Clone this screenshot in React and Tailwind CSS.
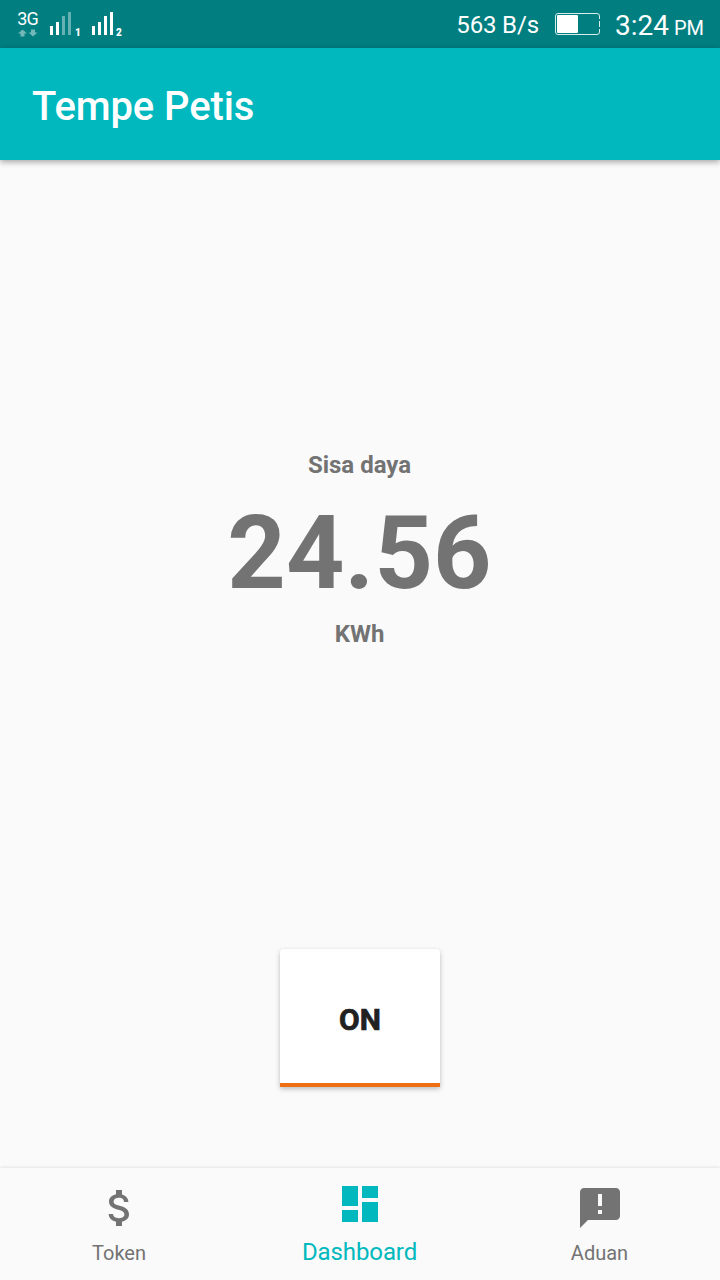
const Bars = ({ dim = 4 }) => (
  <svg className="h-6 w-[22px]" viewBox="0 0 22 24" fill="white">
    {[9, 13, 19, 23].map((h, i) => (
      <rect key={h} x={i * 6} y={24 - h} width="3" height={h} opacity={i >= dim ? 0.4 : 1} />
    ))}
  </svg>
);

function StatusBar() {
  return (
    <header className="flex h-12 shrink-0 items-start bg-[#007e80] text-white">
      <div className="ml-[17px] mt-3 flex w-[21px] flex-col items-center">
        <span className="h-[14px] text-[18px] leading-[14px] tracking-[-1px]">3G</span>
        <svg className="mt-[3px] h-2 w-[21px]" viewBox="0 0 21 8" fill="white" opacity="0.45">
          <path d="M5.500 0.500l4.500 4H7.500v3h-4v-3H1zM16 7.500l-4.500-4H14v-3h4v3h2.500z" />
        </svg>
      </div>
      <div className="ml-3 mt-[11px] flex items-end">
        <Bars dim={2} />
        <span className="ml-[3px] h-2 w-[7px] text-[10px] font-black leading-[11px]">1</span>
      </div>
      <div className="ml-[10px] mt-[11px] flex items-end">
        <Bars />
        <span className="ml-[2px] h-2 w-[7px] text-[10px] font-black leading-[11px]">2</span>
      </div>
      <span className="ml-auto mt-[9px] text-[24px] leading-8 tracking-[-0.15px]">563 B/s</span>
      <svg className="ml-4 mt-3 h-6 w-[46px]" viewBox="0 0 46 24">
        <path
          d="M44.500 7V4Q44.500 1.500 42 1.500H3Q.5 1.500.5 4v16q0 2.500 2.500 2.500h39q2.500 0 2.500-2.500v-3M44.500 9v6"
          fill="none"
          stroke="white"
          strokeOpacity="0.85"
        />
        <rect x="2" y="3" width="21" height="18" rx="1" fill="white" />
      </svg>
      <div className="ml-[14px] mr-4 mt-[10px] flex items-baseline leading-8">
        <span className="text-[28px]">3:24</span>
        <span className="ml-[5px] text-[20px]">PM</span>
      </div>
    </header>
  );
}

const icons = {
  token:
    'M11.8 10.9c-2.27-.59-3-1.2-3-2.150 0-1.090 1.010-1.850 2.700-1.850 1.780 0 2.440.85 2.500 2.100h2.210c-.07-1.720-1.120-3.300-3.210-3.810V3h-3v2.160c-1.940.42-3.500 1.680-3.500 3.610 0 2.310 1.910 3.460 4.700 4.130 2.500.6 3 1.480 3 2.410 0 .69-.49 1.790-2.700 1.790-2.060 0-2.870-.92-2.980-2.100h-2.200c.12 2.190 1.760 3.420 3.680 3.830V21h3v-2.150c1.950-.37 3.500-1.500 3.500-3.550 0-2.840-2.430-3.810-4.700-4.400z',
  dashboard: 'M3 13h8V3H3v10zm0 8h8v-6H3v6zm10 0h8V11h-8v10zm0-18v6h8V3h-8z',
  complaint:
    'M20 2H4c-1.100 0-1.990.9-1.990 2L2 22l4-4h14c1.100 0 2-.9 2-2V4c0-1.100-.9-2-2-2zm-7 13h-2v-2h2v2zm0-4h-2V5h2v6z',
};

const labelStyles = {
  token: 'mt-[5px] pr-0.5 text-[20px] leading-8',
  dashboard: 'mt-2 pr-px text-[24px] leading-8 tracking-[-0.1px]',
  complaint: 'mt-[5px] pr-px text-[20px] leading-8',
};

function NavItem({ icon, label, active }) {
  return (
    <button
      className={
        active
          ? 'flex flex-1 flex-col items-center pt-3 text-[#00b8bd]'
          : 'flex flex-1 flex-col items-center pt-4 text-[#737373]'
      }
    >
      <svg className="size-12" viewBox="0 0 24 24" fill="currentColor">
        <path d={icons[icon]} />
      </svg>
      <span className={labelStyles[icon]}>{label}</span>
    </button>
  );
}

export default function App() {
  return (
    <div className="flex h-[1280px] w-[720px] flex-col bg-[#fafafa] font-[Roboto,sans-serif]">
      <StatusBar />
      <div className="flex h-28 shrink-0 items-center bg-[#00b8bd] pl-8 pt-[6px] shadow-[0_2px_6px_rgba(0,0,0,0.35)]">
        <h1 className="text-[40px] font-medium leading-[48px] tracking-[-0.1px] text-white">Tempe Petis</h1>
      </div>
      <main className="flex flex-1 flex-col items-center pt-[289px] font-bold text-[#737373]">
        <p className="pr-px text-[24px] leading-8">Sisa daya</p>
        <p className="mt-[12px] pr-px text-[102px] leading-[120px] tracking-[0.2px]">24.56</p>
        <p className="mt-[5px] pr-px text-[24px] leading-8">KWh</p>
        <button className="mt-[299px] flex h-[138px] w-40 items-center justify-center rounded-t border-b-4 border-[#ee6f12] bg-white pt-[6px] text-[30px] font-bold text-[#212121] shadow-[0_2px_5px_rgba(0,0,0,0.25)] [-webkit-text-stroke:0.7px_#212121]">
          ON
        </button>
      </main>
      <nav className="flex h-28 shrink-0 bg-[#fafafa] shadow-[0_-1px_3px_rgba(0,0,0,0.09)]">
        <NavItem icon="token" label="Token" />
        <NavItem icon="dashboard" label="Dashboard" active />
        <NavItem icon="complaint" label="Aduan" />
      </nav>
    </div>
  );
}
